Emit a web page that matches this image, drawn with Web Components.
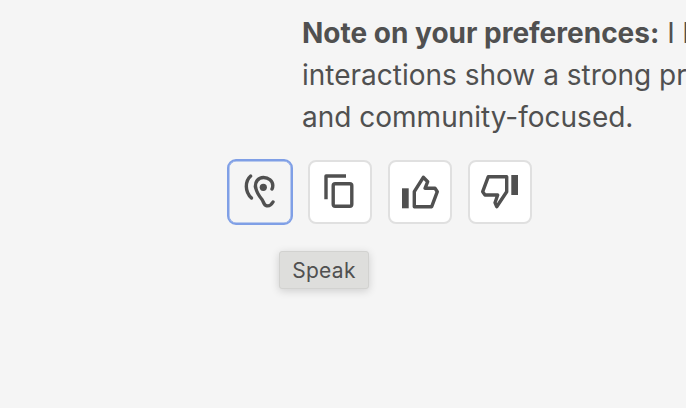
<!DOCTYPE html>
<html>
<head>
<meta charset="utf-8">
<style>
  html, body { margin: 0; height: 100%; background: #f5f5f5; overflow: hidden; }
</style>
</head>
<body>
<chat-message>
  <b>Note on your preferences:</b> I know<br>
  interactions show a strong preference<br>
  and community-focused.
</chat-message>
<action-bar>
  <icon-button focused tip="Speak">
    <svg viewBox="0 0 44 44"><path d="M17.500 17C17 12 20 7.500 25.500 7.500C30.500 7.500 34.800 11 34.800 15.500C34.800 17 34.500 18 34 19"/><path d="M17.500 17C18.500 22 21 26 24 29.500C25.500 31.500 26 35.500 28.500 35.700C31 36.300 33.500 34.500 35 32"/><circle cx="25.300" cy="17.300" r="3.600" fill="#505050" stroke="none"/><path d="M12.700 6C7 11 6.500 21.500 13.500 28"/></svg>
  </icon-button>
  <icon-button>
    <svg viewBox="0 0 44 44"><path d="M28 6H8V29.300" stroke-linecap="butt"/><rect x="15.200" y="13.800" width="18.600" height="22.400" rx="2"/></svg>
  </icon-button>
  <icon-button>
    <svg viewBox="0 0 44 44"><rect x="4" y="18.300" width="6.700" height="20" fill="#505050" stroke="none"/><path d="M16.300 36.700V21.700L25.300 7.300L29.700 11.700L27 18.300H37L39.300 21.700L33.700 36.700Z"/></svg>
  </icon-button>
  <icon-button>
    <svg viewBox="0 0 44 44"><rect x="33.300" y="5" width="6.700" height="20" fill="#505050" stroke="none"/><path d="M28.700 6.700H10.300L4.700 21.700L7 25H19.700L17 32.700L18.700 36.700L28.700 21.700Z"/></svg>
  </icon-button>
</action-bar>

<script>
class ChatMessage extends HTMLElement {
  constructor() {
    super();
    this.attachShadow({ mode: "open" });
    this.shadowRoot.innerHTML = /* html */ `
      <style>
        :host {
          display: block;
          padding: 12px 0 0 302px;
          font: 400 28px/42px Inter, "Noto Sans", sans-serif;
          color: #505050;
          white-space: nowrap;
        }
        ::slotted(b) { font-weight: 700; }
      </style>
      <slot></slot>
    `;
  }
}

class ActionBar extends HTMLElement {
  constructor() {
    super();
    this.attachShadow({ mode: "open" });
    this.shadowRoot.innerHTML = /* html */ `
      <style>
        :host {
          display: flex;
          gap: 16px;
          padding: 22px 0 0 228px;
        }
      </style>
      <slot></slot>
    `;
  }
}

class IconButton extends HTMLElement {
  constructor() {
    super();
    this.attachShadow({ mode: "open" });
  }

  connectedCallback() {
    const tip = this.getAttribute("tip");
    this.shadowRoot.innerHTML = /* html */ `
      <style>
        :host {
          display: flex;
          position: relative;
          box-sizing: border-box;
          width: 64px;
          height: 64px;
          align-items: center;
          justify-content: center;
          background: #fff;
          border: 2px solid #e0e0e0;
          border-radius: 8px;
        }
        :host([focused]) {
          width: 66px;
          height: 66px;
          margin: -1px;
          background: #f5f5f5;
          border-color: #7f9fe6;
          border-radius: 9px;
          box-shadow: inset 0 0 0 .5px #7f9fe6;
        }
        ::slotted(svg) {
          width: 44px;
          height: 44px;
          fill: none;
          stroke: #505050;
          stroke-width: 3.4;
          stroke-linecap: round;
          stroke-linejoin: round;
        }
        .tip {
          position: absolute;
          left: 50px;
          top: 90px;
          box-sizing: border-box;
          width: 90px;
          height: 38px;
          display: flex;
          align-items: center;
          justify-content: center;
          background: #dededc;
          border: 1px solid #d2d2d0;
          border-radius: 3px;
          box-shadow: 0 2px 8px rgba(0, 0, 0, .16);
          font: 400 21px Inter, "Noto Sans", sans-serif;
          letter-spacing: .3px;
          color: #505050;
        }
      </style>
      <slot></slot>
      ${tip ? `<span class="tip">${tip}</span>` : ""}
    `;
  }
}

customElements.define("chat-message", ChatMessage);
customElements.define("action-bar", ActionBar);
customElements.define("icon-button", IconButton);
</script>
</body>
</html>
